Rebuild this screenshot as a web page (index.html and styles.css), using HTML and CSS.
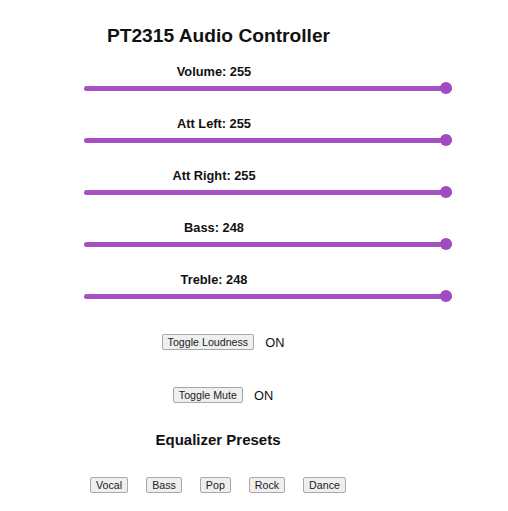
FILE: index.html
```html
<!DOCTYPE html>
<html lang="en">
<head>
<meta charset="utf-8">
<title>PT2315 Audio Controller</title>
<link rel="stylesheet" href="styles.css">
</head>
<body>
<div class="app">
  <h2 class="title">PT2315 Audio Controller</h2>

  <div class="group">
    <label class="label">Volume: 255</label>
    <input class="slider" type="range" min="0" max="255" value="255">
  </div>
  <div class="group">
    <label class="label">Att Left: 255</label>
    <input class="slider" type="range" min="0" max="255" value="255">
  </div>
  <div class="group">
    <label class="label">Att Right: 255</label>
    <input class="slider" type="range" min="0" max="255" value="255">
  </div>
  <div class="group">
    <label class="label">Bass: 248</label>
    <input class="slider" type="range" min="0" max="248" value="248">
  </div>
  <div class="group">
    <label class="label">Treble: 248</label>
    <input class="slider" type="range" min="0" max="248" value="248">
  </div>

  <div class="toggle toggle-loud">
    <button class="btn">Toggle Loudness</button>
    <span class="state">ON</span>
  </div>
  <div class="toggle toggle-mute">
    <button class="btn">Toggle Mute</button>
    <span class="state">ON</span>
  </div>

  <h3 class="subtitle">Equalizer Presets</h3>
  <div class="presets">
    <button class="btn preset">Vocal</button>
    <button class="btn preset">Bass</button>
    <button class="btn preset">Pop</button>
    <button class="btn preset">Rock</button>
    <button class="btn preset">Dance</button>
  </div>
</div>
</body>
</html>
```
FILE: styles.css
```css
html, body {
  margin: 0;
  padding: 0;
  background: #ffffff;
}

body {
  font-family: "Liberation Sans", Arial, sans-serif;
  color: #111111;
}

.app {
  width: 436px;
  padding-top: 25px;
  display: flex;
  flex-direction: column;
  align-items: center;
}

.title {
  margin: 0 0 0 1px;
  font-size: 19.2px;
  line-height: 22px;
  font-weight: bold;
}

.group {
  align-self: stretch;
  display: flex;
  flex-direction: column;
  align-items: center;
  padding-right: 8px;
  margin-top: 22px;
}

.app .group:first-of-type {
  margin-top: 17px;
}

.label {
  font-size: 12.8px;
  line-height: 15px;
  font-weight: bold;
}

.slider {
  -webkit-appearance: none;
  appearance: none;
  align-self: flex-start;
  margin: 3px 0 0 84px;
  width: 368px;
  height: 12px;
  background: transparent;
}

.slider::-webkit-slider-runnable-track {
  height: 5px;
  border-radius: 3px;
  background: #a550c3;
}

.slider::-webkit-slider-thumb {
  -webkit-appearance: none;
  appearance: none;
  width: 12px;
  height: 12px;
  border-radius: 50%;
  background: #a14bc0;
  margin-top: -3.5px;
  border: none;
}

.toggle {
  display: flex;
  align-items: center;
  gap: 11px;
  height: 16px;
  padding-left: 10px;
}

.toggle-loud {
  margin-top: 32px;
}

.toggle-mute {
  margin-top: 37px;
}

.state {
  font-size: 12.8px;
  line-height: 15px;
}

.btn {
  font-family: "Liberation Sans", Arial, sans-serif;
  font-size: 10.67px;
  line-height: 12px;
  height: 16px;
  padding: 1px 5px;
  color: #222;
  background: #efefef;
  border: 1px solid #a8a8a8;
  border-radius: 2px;
  box-sizing: border-box;
}

.subtitle {
  margin: 28px 0 0;
  font-size: 15px;
  line-height: 17px;
  font-weight: bold;
}

.presets {
  margin-top: 29px;
  display: flex;
  gap: 18px;
}
```
